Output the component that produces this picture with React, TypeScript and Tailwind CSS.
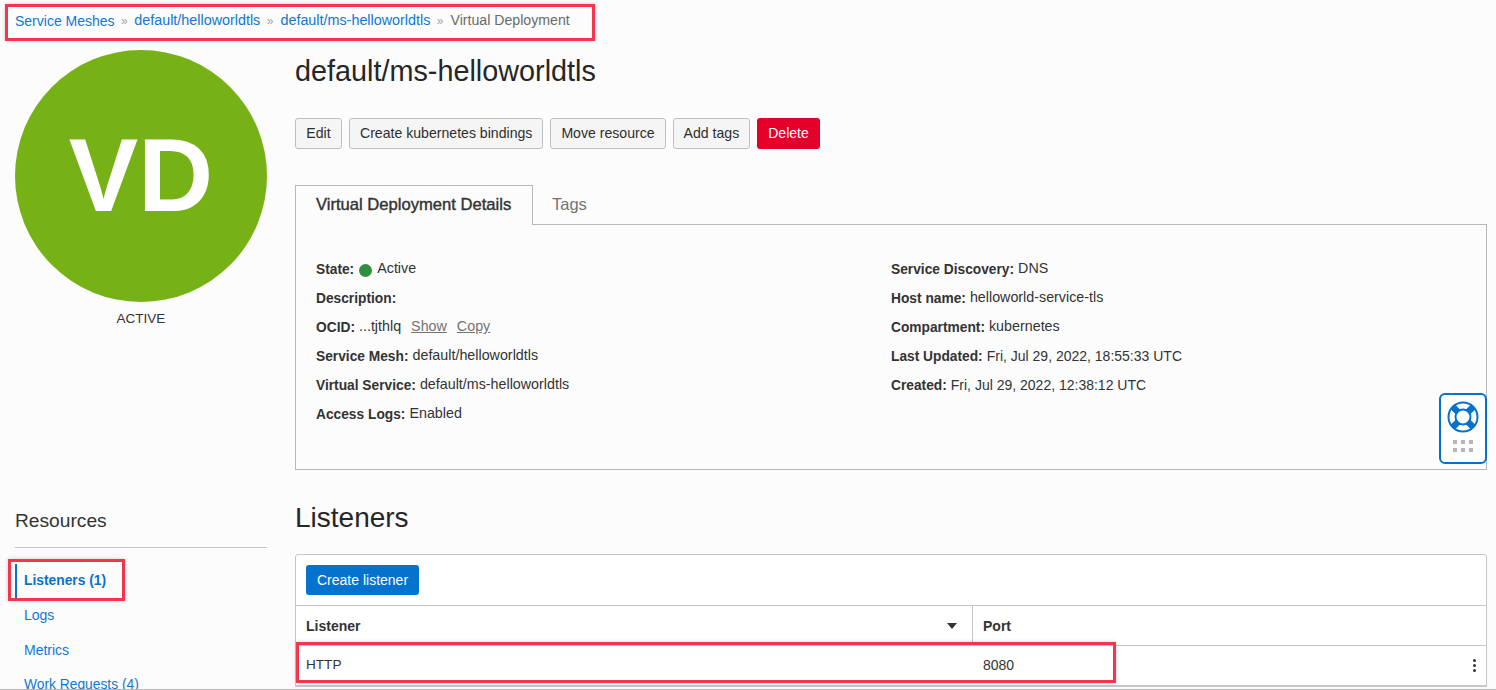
const leftDetails = [
  { label: "Service Discovery:", value: "DNS" },
  { label: "Host name:", value: "helloworld-service-tls" },
  { label: "Compartment:", value: "kubernetes" },
  { label: "Last Updated:", value: <span className="text-[14px]">Fri, Jul 29, 2022, 18:55:33 UTC</span> },
  { label: "Created:", value: <span className="text-[14px]">Fri, Jul 29, 2022, 12:38:12 UTC</span> },
]

function Sep() {
  return <span className="mx-[6.5px] text-[12px] text-[#a3a3a3]">»</span>
}

function ActionButton({ children }: { children: React.ReactNode }) {
  return (
    <button className="h-[31px] rounded-[3px] border border-[#bcbfc4] bg-[#f5f5f5] px-[10px] text-[14.1px] text-[#2e2e2e]">
      {children}
    </button>
  )
}

function Row({ label, children }: { label: string; children?: React.ReactNode }) {
  return (
    <div className="flex h-[29px] items-center text-[14.3px] text-[#333]">
      <span className="mr-[4px] text-[13.75px] font-bold">{label}</span>
      {children && <span className="mb-[3px] flex items-center">{children}</span>}
    </div>
  )
}

function HelpWidget() {
  return (
    <div className="absolute left-[1439px] top-[393px] flex h-[71px] w-[48px] flex-col items-center rounded-[6px] border-2 border-[#0572ce] bg-white pt-[6px]">
      <svg width="32" height="32" viewBox="0 0 32 32" fill="none">
        <circle cx="16" cy="16" r="14.5" stroke="#0572ce" strokeWidth="2" />
        <circle cx="16" cy="16" r="7.5" stroke="#0572ce" strokeWidth="2" />
        <path
          d="M5.7 5.7 L11 11 M26.3 5.7 L21 11 M5.7 26.3 L11 21 M26.3 26.3 L21 21"
          stroke="#0572ce"
          strokeWidth="6.5"
        />
      </svg>
      <div className="mt-[7px] grid grid-cols-3 gap-[4px]">
        {[0, 1, 2, 3, 4, 5].map((i) => (
          <span key={i} className="h-[4px] w-[4px] bg-[#b4b7bb]" />
        ))}
      </div>
    </div>
  )
}

export default function App() {
  return (
    <div className="relative h-[690px] w-[1496px] overflow-hidden border-b border-[#b8b8b8] bg-[#fcfcfc] font-['Liberation_Sans',Arial,sans-serif]">
      <nav className="flex h-[40px] items-center pl-[15px] pt-[2px] text-[14.35px]">
        <a className="text-[14px] text-[#0f78d3]">Service Meshes</a>
        <Sep />
        <a className="text-[#0f78d3]">default/helloworldtls</a>
        <Sep />
        <a className="ml-[0.5px] text-[#0f78d3]">default/ms-helloworldtls</a>
        <Sep />
        <span className="ml-[0.5px] text-[14.15px] text-[#6b6b6b]">Virtual Deployment</span>
      </nav>

      <div className="flex pl-[15px] pt-[10px]">
        <aside className="w-[252px] shrink-0">
          <div className="flex h-[252px] w-[252px] items-center justify-center rounded-full bg-[#76b216] pb-[2px] text-[104px] leading-none font-bold text-white">
            VD
          </div>
          <div className="mt-[8px] text-center text-[13.5px] leading-[17px] text-[#333]">ACTIVE</div>

          <h2 className="mt-[182px] text-[19.2px] leading-[24px] text-[#333]">Resources</h2>
          <div className="mt-[14px] border-t border-[#c4c6ca]" />
          <ul className="mt-[16px] text-[14px]">
            <li className="flex h-[34px] items-center border-l-2 border-[#0572ce] pl-[7px] text-[13.8px] font-bold text-[#0572ce]">
              Listeners (1)
            </li>
            <li className="flex h-[34px] items-center pl-[9px] text-[#0f78d3]">Logs</li>
            <li className="flex h-[36px] items-center pl-[9px] text-[#0f78d3]">Metrics</li>
            <li className="flex h-[34px] items-center pl-[9px] text-[13.8px] text-[#0f78d3]">Work Requests (4)</li>
          </ul>
        </aside>

        <main className="ml-[28px] w-[1192px] shrink-0">
          <h1 className="text-[28.8px] leading-[42px] text-[#262626]">default/ms-helloworldtls</h1>

          <div className="mt-[26px] flex gap-[7px]">
            <div className="w-[47px]">
              <button className="h-[31px] w-full rounded-[3px] border border-[#bcbfc4] bg-[#f5f5f5] text-[14.1px] text-[#2e2e2e]">Edit</button>
            </div>
            <ActionButton>Create kubernetes bindings</ActionButton>
            <ActionButton>Move resource</ActionButton>
            <ActionButton>Add tags</ActionButton>
            <button className="h-[31px] rounded-[3px] bg-[#e4002b] px-[11px] text-[14px] text-white">Delete</button>
          </div>

          <div className="relative z-10 mt-[36px] flex h-[40px] items-end">
            <div className="flex h-[40px] w-[238px] items-center border border-b-0 border-[#b5b8bc] bg-[#fcfcfc] pl-[20px] text-[16.6px] text-[#333] [-webkit-text-stroke:0.4px_#333]">
              Virtual Deployment Details
            </div>
            <div className="flex h-[39px] flex-1 items-center border-b border-[#b5b8bc] pl-[19px] pb-[2px] text-[16.5px] text-[#737373]">Tags</div>
          </div>

          <section className="flex h-[246px] -mt-px border border-[#b5b8bc] pl-[20px] pt-[31px]">
            <div className="w-[575px]">
              <Row label="State:">
                <span className="mr-[5px] ml-[1px] mt-[2px] h-[13px] w-[13px] rounded-full bg-[#2f8f3f]" />
                Active
              </Row>
              <Row label="Description:" />
              <Row label="OCID:">
                ...tjthlq
                <span className="ml-[10px] text-[#737373] underline">Show</span>
                <span className="ml-[10px] text-[#737373] underline">Copy</span>
              </Row>
              <Row label="Service Mesh:">default/helloworldtls</Row>
              <Row label="Virtual Service:">default/ms-helloworldtls</Row>
              <Row label="Access Logs:">Enabled</Row>
            </div>
            <div>
              {leftDetails.map((d) => (
                <Row key={d.label} label={d.label}>
                  {d.value}
                </Row>
              ))}
            </div>
          </section>

          <h2 className="mt-[28px] text-[28px] leading-[40px] text-[#262626]">Listeners</h2>

          <div className="mt-[16px] rounded-t-[3px] border border-[#c4c6ca] bg-white">
            <div className="flex h-[51px] items-center border-b border-[#c4c6ca] pl-[10px]">
              <button className="h-[30px] rounded-[3px] bg-[#0572ce] px-[11px] text-[14px] text-white">Create listener</button>
            </div>
            <div className="flex h-[40px] border-b border-[#c4c6ca] text-[14px] font-bold text-[#333]">
              <div className="flex w-[677px] items-center justify-between border-r border-[#c4c6ca] pl-[10px] pr-[15px] pt-[2px]">
                Listener
                <span className="mb-[2px] h-0 w-0 border-x-[5px] border-t-[6px] border-x-transparent border-t-[#333]" />
              </div>
              <div className="flex items-center pl-[10px] pt-[2px]">Port</div>
            </div>
            <div className="flex h-[40px] items-center border-b border-[#c4c6ca] text-[14px] text-[#333]">
              <div className="w-[677px] pl-[10px] text-[13.6px]">HTTP</div>
              <div className="flex-1 pl-[10px]">8080</div>
              <div className="mr-[10px] flex flex-col gap-[2px]">
                <span className="h-[3px] w-[3px] rounded-full bg-[#333]" />
                <span className="h-[3px] w-[3px] rounded-full bg-[#333]" />
                <span className="h-[3px] w-[3px] rounded-full bg-[#333]" />
              </div>
            </div>
          </div>
        </main>
      </div>

      <HelpWidget />

      {/* red annotation boxes */}
      <div className="absolute left-[5px] top-[4px] h-[37px] w-[590px] border-[3px] border-[#f4364c] shadow-[0_0_4px_rgba(0,0,0,0.2)]" />
      <div className="absolute left-[8px] top-[559px] h-[42px] w-[117px] border-[3px] border-[#f4364c] shadow-[0_0_4px_rgba(0,0,0,0.2)]" />
      <div className="absolute left-[296px] top-[642px] h-[41px] w-[820px] border-[3px] border-[#f4364c] shadow-[0_0_4px_rgba(0,0,0,0.2)]" />
    </div>
  )
}
